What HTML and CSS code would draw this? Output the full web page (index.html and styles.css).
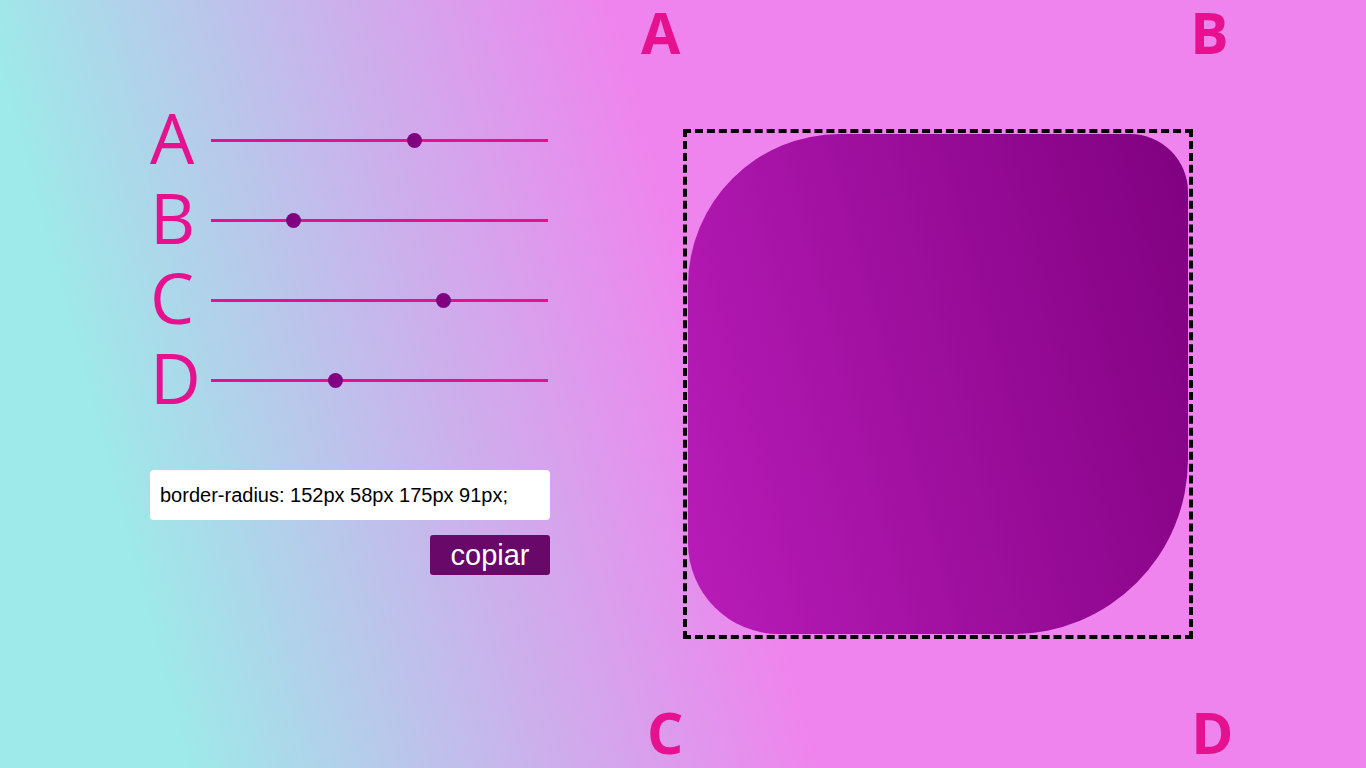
FILE: index.html
```html
<!DOCTYPE html>
<html lang="es">
<head>
<meta charset="utf-8">
<title>Border radius</title>
<link rel="stylesheet" href="styles.css">
</head>
<body>
<main class="page">
  <section class="controls">
    <div class="sliders">
      <label class="row"><span class="label">A</span><input class="range" type="range" min="0" max="250" value="152"></label>
      <label class="row"><span class="label">B</span><input class="range" type="range" min="0" max="250" value="58"></label>
      <label class="row"><span class="label">C</span><input class="range" type="range" min="0" max="250" value="175"></label>
      <label class="row"><span class="label">D</span><input class="range" type="range" min="0" max="250" value="91"></label>
    </div>
    <input class="output" type="text" value="border-radius: 152px 58px 175px 91px;" readonly>
    <div class="actions"><button class="copy" type="button">copiar</button></div>
  </section>
  <section class="preview">
    <span class="corner corner-a">A</span>
    <span class="corner corner-b">B</span>
    <div class="frame"><div class="shape"></div></div>
    <span class="corner corner-c">C</span>
    <span class="corner corner-d">D</span>
  </section>
</main>
</body>
</html>
```

FILE: styles.css
```css
html, body {
  margin: 0;
  padding: 0;
  height: 100%;
}

body {
  background: linear-gradient(75deg, #9ee9e9 12%, #ef84ee 52%, #ef84ee 100%);
  font-family: "Open Sans", "Noto Sans", sans-serif;
  overflow: hidden;
}

.page {
  display: flex;
  align-items: flex-start;
  height: 100vh;
}

.controls {
  width: 400px;
  margin-left: 150px;
  padding-top: 100px;
  display: flex;
  flex-direction: column;
}

.sliders {
  display: flex;
  flex-direction: column;
}

.row {
  display: flex;
  align-items: center;
  height: 80px;
  gap: 21px;
}

.label {
  font-size: 70px;
  line-height: 60px;
  margin-bottom: 6px;
  color: #e5118e;
  font-weight: 400;
  width: 40px;
}

.range {
  -webkit-appearance: none;
  appearance: none;
  width: 337px;
  height: 15px;
  margin: 0;
  background: transparent;
}

.range::-webkit-slider-runnable-track {
  height: 3px;
  background: #e5118e;
  border: none;
}

.range::-webkit-slider-thumb {
  -webkit-appearance: none;
  appearance: none;
  width: 15px;
  height: 15px;
  border-radius: 50%;
  background: #800080;
  margin-top: -6px;
  border: none;
}

.output {
  margin-top: 50px;
  width: 400px;
  height: 50px;
  box-sizing: border-box;
  border: none;
  border-radius: 4px;
  padding: 0 10px;
  background: #fff;
  font-family: "Liberation Sans", Arial, sans-serif;
  font-size: 20px;
  color: #000;
  outline: none;
}

.actions {
  display: flex;
  justify-content: flex-end;
  margin-top: 15px;
}

.copy {
  width: 120px;
  height: 40px;
  border: none;
  border-radius: 3px;
  background: #680868;
  color: #fff;
  font-family: "Liberation Sans", Arial, sans-serif;
  font-size: 29px;
  padding: 0;
  line-height: 40px;
}

.preview {
  margin-left: 91px;
  display: grid;
  grid-template-columns: auto 510px auto;
  grid-template-rows: auto auto auto;
}

.corner {
  font-size: 57px;
  font-weight: 700;
  line-height: 64px;
  color: #e5118e;
}

.corner-a { grid-row: 1; grid-column: 1; justify-self: end; margin-right: 3px; }
.corner-b { grid-row: 1; grid-column: 3; justify-self: start; margin-left: -3px; }
.corner-c { grid-row: 3; grid-column: 1; justify-self: end; margin-top: 61px; }
.corner-d { grid-row: 3; grid-column: 3; justify-self: start; margin-top: 61px; margin-left: -2px; }

.frame {
  grid-row: 2;
  grid-column: 2;
  margin-top: 65px;
  width: 510px;
  height: 510px;
  box-sizing: border-box;
  border: 4px dashed #000;
  padding: 1px;
}

.shape {
  width: 500px;
  height: 500px;
  border-radius: 152px 58px 175px 91px;
  background: linear-gradient(75deg, #b91cb9 0%, #800080 100%);
}
```
